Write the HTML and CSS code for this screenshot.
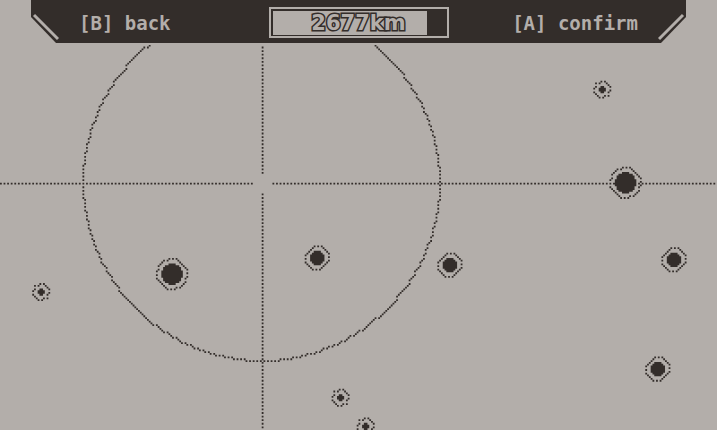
FILE: index.html
```html
<!DOCTYPE html>
<html lang="en">
<head>
    <meta charset="UTF-8">
    <title>Star Map</title>
    <link rel="stylesheet" href="styles.css">
</head>
<body>

    <main class="screen">
        <svg class="map" viewBox="0 0 400 240" preserveAspectRatio="none" aria-label="Star map">
            <path id="mapPixels"/>
        </svg>

        <header class="topbar">
            <div class="panel">
                <svg class="corner corner-left" viewBox="0 0 28 28"><path d="M3 2L27 26"/></svg>
                <button class="action" type="button">[B] back</button>
                <div class="range" role="meter" aria-label="Range" aria-valuenow="2677">
                    <div class="range-fill"></div>
                    <span class="range-text">2677km</span>
                </div>
                <button class="action action-confirm" type="button">[A] confirm</button>
                <svg class="corner corner-right" viewBox="0 0 28 28"><path d="M25 2L1 26"/></svg>
            </div>
        </header>
    </main>

    <script src="map.js"></script>

</body>
</html>
```
FILE: styles.css
```css
body {
    margin: 0;
    overflow: hidden;
    background: #b3aeaa;
    color: #332d2a;
    font-family: "DejaVu Sans Mono", monospace;
}

.screen {
    position: relative;
}

.map {
    display: block;
    width: 100%;
    height: 100vh;
    fill: #332d2a;
}

/* the bar lies over the map */
.topbar {
    position: absolute;
    top: 0;
    left: 31px;
    right: 31px;
    padding-bottom: 2px;
    background: #b3aeaa;
}

.panel {
    position: relative;
    display: grid;
    grid-template-columns: 1fr 180px 1fr;
    align-items: center;
    padding: 7px 48px 5px;
    background: #332d2a;
    clip-path: polygon(0 0, 100% 0, 100% 17px, calc(100% - 25px) 100%, 25px 100%, 0 17px);
}

.corner {
    position: absolute;
    bottom: 2px;
    width: 28px;
    height: 28px;
    fill: none;
    stroke: #b3aeaa;
    stroke-width: 3;
}

.corner-left {
    left: 0;
}

.corner-right {
    right: 0;
}

.action {
    justify-self: start;
    padding: 0;
    border: 0;
    background: none;
    color: #b3aeaa;
    font: bold 19px/24px "DejaVu Sans Mono", monospace;
}

.action-confirm {
    justify-self: end;
}

.range {
    display: grid;
    box-sizing: border-box;
    height: 31px;
    padding: 2px;
    border: 2px solid #b3aeaa;
}

.range-fill,
.range-text {
    grid-area: 1 / 1;
}

.range-fill {
    width: 90%;
    background: #b3aeaa;
}

.range-text {
    color: #b3aeaa;
    font: bold 21px/24px "DejaVu Sans", sans-serif;
    text-align: center;
    -webkit-text-stroke: 3px #332d2a;
    paint-order: stroke fill;
}
```
FILE: map.js
```js
const planets = [
    { x: 96, y: 153, size: 12 },
    { x: 349, y: 102, size: 12 },
    { x: 177, y: 144, size: 8 },
    { x: 251, y: 148, size: 8 },
    { x: 376, y: 145, size: 8 },
    { x: 367, y: 206, size: 8 },
    { x: 336, y: 50, size: 4 },
    { x: 23, y: 163, size: 4 },
    { x: 190, y: 222, size: 4 },
    { x: 204, y: 238, size: 4 }
];
const cursor = { x: 146, y: 102, radius: 100, gap: 6 };

let d = '';

function pixel(x, y, width = 1) {
    d += `M${x} ${y}h${width}v1h-${width}z`;
}

// dotted lines only use every other pixel of the grid
function dot(x, y) {
    if ((x + y) % 2 === 0) pixel(x, y);
}

function inside(x, y, r) {
    return (x + 0.5) ** 2 + (y + 0.5) ** 2 <= r * r;
}

function drawRing(cx, cy, r) {
    for (let y = -r; y < r; y++) {
        for (let x = -r; x < r; x++) {
            const outer = [x + (x < 0 ? -1 : 1), y + (y < 0 ? -1 : 1)];
            if (inside(x, y, r) && !inside(outer[0], outer[1], r)) dot(cx + x, cy + y);
        }
    }
}

function drawDisc(cx, cy, r) {
    for (let y = -r; y < r; y++) {
        let half = 0;
        while (inside(half, y, r)) half++;
        if (half > 0) pixel(cx - half, cy + y, half * 2);
    }
}

for (let x = 0; x < 400; x++) {
    const hidden = planets.some(p => inside(x - p.x, cursor.y - p.y, p.size / 2));
    if (Math.abs(x - cursor.x) >= cursor.gap && !hidden) dot(x, cursor.y);
}
for (let y = 0; y < 240; y++) {
    if (Math.abs(y - cursor.y) >= cursor.gap) dot(cursor.x, y);
}
drawRing(cursor.x, cursor.y, cursor.radius);

planets.forEach(p => {
    drawDisc(p.x, p.y, p.size / 2);
    drawRing(p.x, p.y, p.size / 2 + 3);
});

document.getElementById('mapPixels').setAttribute('d', d);
```
